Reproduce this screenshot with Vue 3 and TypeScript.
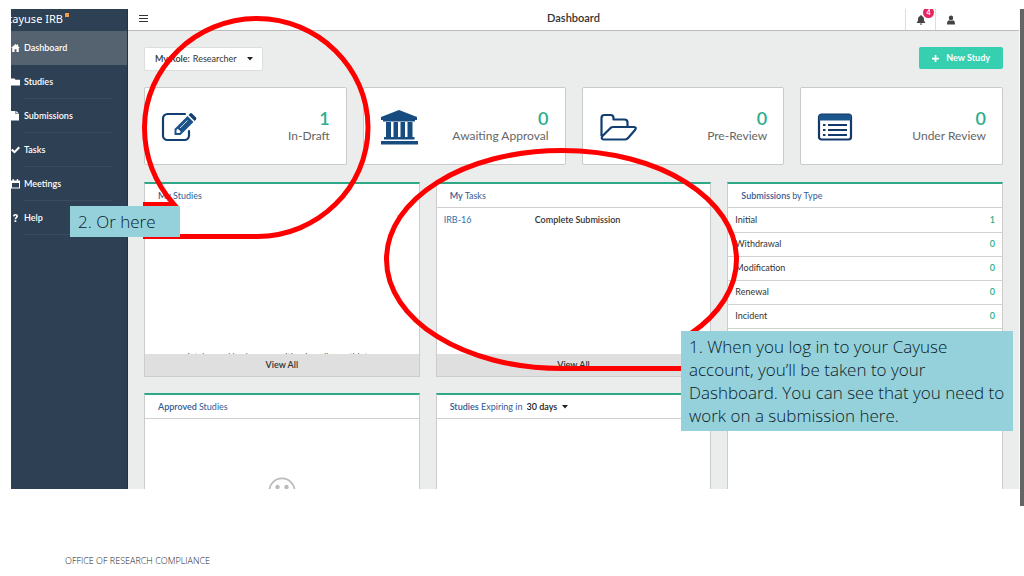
<script setup lang="ts">
import { ref } from 'vue'

interface NavItem { label: string; icon: string; active?: boolean }
interface Stat { label: string; count: number; icon: string }

const navItems: NavItem[] = [
  { label: 'Dashboard', icon: 'M0 5 4.500 1 6 2.300V1.500h1.200v1.900L9 5H7.800v4H5.500V6.200h-2V9H1.200V5z', active: true },
  { label: 'Studies', icon: 'M0 1.500h3.500l1 1.300H9V8.500H0z' },
  { label: 'Submissions', icon: 'M0 0h4.500v3H8v6.500H0zM5.200 0 8 2.400H5.200z' },
  { label: 'Tasks', icon: 'M0 5.200 1.500 3.700 3.500 5.700 7.500 1.500 9 3 3.500 8.500z' },
  { label: 'Meetings', icon: 'M0 1.500h1.500V0h1.300v1.500h3V0h1.300v1.500H9V9.500H0zM1 4v4.500h7V4z' },
  { label: 'Help', icon: 'M2 3.200C2 .2 7 .2 7 3.200 7 4.800 5.200 5 5.200 6.300H3.600C3.600 4.500 5.200 4.400 5.200 3.300 5.200 2.300 3.700 2.300 3.600 3.500zM3.500 7.200h1.800V9H3.500z' },
]

const stats: Stat[] = [
  { label: 'In-Draft', count: 1, icon: 'edit' },
  { label: 'Awaiting Approval', count: 0, icon: 'bank' },
  { label: 'Pre-Review', count: 0, icon: 'folder' },
  { label: 'Under Review', count: 0, icon: 'list' },
]

const submissionTypes = [
  { type: 'Initial', count: 1 },
  { type: 'Withdrawal', count: 0 },
  { type: 'Modification', count: 0 },
  { type: 'Renewal', count: 0 },
  { type: 'Incident', count: 0 },
]

const role = ref('Researcher')
const expiry = ref('30 days')
</script>

<template>
  <div class="slide">
    <div class="capture">
      <div class="app">
        <aside class="sidebar">
          <div class="logo"><span>cayuse IRB</span><i></i></div>
          <nav>
            <a v-for="item in navItems" :key="item.label" href="#" :class="{ active: item.active }">
              <svg viewBox="0 0 9 10" aria-hidden="true"><path :d="item.icon" fill-rule="evenodd" /></svg>
              <span>{{ item.label }}</span>
            </a>
          </nav>
        </aside>

        <div class="content">
          <header class="topbar">
            <button class="menu" aria-label="Menu"><i></i><i></i><i></i></button>
            <h1>Dashboard</h1>
            <div class="tools">
              <button class="bell" aria-label="Notifications">
                <svg viewBox="0 0 10 10"><path d="M5 0C5.600 0 5.700.5 5.700 1 7.500 1.400 8 3 8 4.500 8 6.300 8.800 7.200 9.500 8H.5C1.200 7.200 2 6.300 2 4.500 2 3 2.500 1.400 4.300 1 4.300.5 4.400 0 5 0zM3.800 8.500h2.400C6 10.200 4 10.200 3.800 8.500z" /></svg>
                <span class="badge">4</span>
              </button>
              <button class="user" aria-label="Account">
                <svg viewBox="0 0 10 10"><path d="M5 .5C8 .5 7.800 5.400 5 5.400S2 .5 5 .5zM1 9.500C1 7 1.500 5.500 3 5.200 4.200 6.300 5.800 6.300 7 5.200 8.500 5.500 9 7 9 9.500z" /></svg>
              </button>
            </div>
          </header>

          <main>
            <div class="actions">
              <div class="role">
                <label for="role">My Role:</label>
                <select id="role" v-model="role"><option>Researcher</option></select>
                <svg class="caret" viewBox="0 0 6 4" aria-hidden="true"><path d="M0 0h6L3 3.500z" /></svg>
              </div>
              <button class="new-study">
                <svg viewBox="0 0 8 8" aria-hidden="true"><path d="M3 0h2v3h3v2H5v3H3V5H0V3h3z" /></svg>
                <span>New Study</span>
              </button>
            </div>

            <div class="stats">
              <a v-for="s in stats" :key="s.label" href="#" class="stat">
                <svg v-if="s.icon === 'edit'" viewBox="0 0 38 36" aria-hidden="true">
                  <path d="M24 4H6.500A4.500 4.500 0 0 0 2 8.500v17A4.500 4.500 0 0 0 6.500 30h17a4.500 4.500 0 0 0 4.500-4.500V21" fill="none" stroke="#123f70" stroke-width="2.200" stroke-linecap="round" />
                  <path d="M13.500 19 26.500 6l6 6-13 13h-6z" fill="#1c5489" />
                  <path d="M27.600 4.900l1.400-1.400q1-.8 2 0l4 4q.8 1 0 2l-1.400 1.400z" fill="#123f70" />
                  <path d="M15.500 20v3h3l1.300-1.300-3-3z" fill="#fff" />
                  <path d="M19 18 26.500 10.500" stroke="#fff" stroke-width=".8" />
                </svg>
                <svg v-else-if="s.icon === 'bank'" viewBox="0 0 38 36" aria-hidden="true">
                  <path d="M19 0 37 7v3h-2v1.500H3V10H1V7z" fill="#174c80" />
                  <path d="M6 12h5v15H6zM13.500 12h4.500v15h-4.500zM20.500 12H25v15h-4.500zM27.500 12h5v15h-5zM4 27h30.500v2.500H4zM1 31h37v3.500H1z" fill="#174c80" />
                </svg>
                <svg v-else-if="s.icon === 'folder'" viewBox="0 0 38 36" aria-hidden="true">
                  <path d="M2.500 26V8q0-3 3-3h6q3 0 3 3v1.500h11q3 0 3 3V17M5 29.500h21q2 0 3.500-2l6.500-7.500q2-3-1-3H14q-2 0-3.500 2L3 26.500Q2 29.500 5 29.500z" fill="none" stroke="#123f70" stroke-width="2.200" stroke-linejoin="round" />
                </svg>
                <svg v-else viewBox="0 0 38 36" aria-hidden="true">
                  <rect x="2" y="4.500" width="32" height="25" rx="2.500" fill="#fff" stroke="#12396a" stroke-width="2.200" />
                  <path d="M2 4.500h32v6H2z" fill="#1b568d" />
                  <path d="M6 15h2.500M6 20h2.500M6 25h2.500M11 15h19M11 20h19M11 25h19" stroke="#12396a" stroke-width="2.200" />
                </svg>
                <span class="figures"><strong>{{ s.count }}</strong><span>{{ s.label }}</span></span>
              </a>
            </div>

            <div class="panels">
              <section class="panel plain">
                <h2><b>My</b> Studies</h2>
                <div class="body"><p class="excerpt">intake, and body composition in college athletes</p></div>
                <button class="view-all">View All</button>
              </section>

              <section class="panel">
                <h2><b>My</b> Tasks</h2>
                <div class="body">
                  <table class="tasks"><tbody><tr><td><a href="#">IRB-16</a></td><td><b>Complete Submission</b></td></tr></tbody></table>
                </div>
                <button class="view-all">View All</button>
              </section>

              <section class="panel types">
                <h2><b>Submissions</b> by Type</h2>
                <table><tbody>
                  <tr v-for="t in submissionTypes" :key="t.type"><td>{{ t.type }}</td><td class="count">{{ t.count }}</td></tr>
                </tbody></table>
              </section>

              <section class="panel">
                <h2><b>Approved</b> Studies</h2>
                <div class="body face">
                  <svg viewBox="0 0 28 28" aria-hidden="true"><circle cx="14" cy="14" r="12.700" fill="none" stroke="#bbb" stroke-width="1.800" /><circle cx="9.500" cy="10" r="2.200" /><circle cx="18.500" cy="10" r="2.200" /></svg>
                </div>
              </section>

              <section class="panel">
                <h2>
                  <label for="expiry"><b>Studies</b> Expiring in</label>
                  <select id="expiry" v-model="expiry"><option>30 days</option></select>
                  <svg class="caret" viewBox="0 0 6 4" aria-hidden="true"><path d="M0 0h6L3 3.500z" /></svg>
                </h2>
              </section>
            </div>
          </main>
        </div>
      </div>
      <div class="edge"></div>
    </div>

    <svg class="outlines" viewBox="0 0 1024 576" aria-hidden="true">
      <path d="M143 236.500H257C318 236.500 368 187 368 127.500S318 18.500 257 18.500 144.500 68 144.500 127.500C144.500 158 156 184 174 204.500H143" />
      <path d="M690 368.500H562C464 368.500 386.500 320 386.500 259.500S464 150.500 562 150.500 736.500 199 736.500 259.500C736.500 287 720 314 690 334" />
    </svg>
    <p class="callout second">2. Or here</p>
    <p class="callout first">1. When you log in to your Cayuse account, you’ll be taken to your Dashboard. You can see that you need to work on a submission here.</p>

    <footer>OFFICE OF RESEARCH COMPLIANCE</footer>
  </div>
</template>

<style>
body { margin: 0; background: #fff; }
</style>

<style scoped>
* { box-sizing: border-box; }
.slide { position: relative; min-height: 100vh; overflow: hidden; padding: 9px 0 0 11px; font: 9px/12px Lato, sans-serif; color: #333; background: #fff; }
button, select { font: inherit; color: inherit; border: 0; margin: 0; padding: 0; background: none; }
select { appearance: none; }
a { color: inherit; text-decoration: none; }
h1, h2, p { margin: 0; font-weight: 400; }
b { font-weight: 600; }
.capture { display: flex; }
.app { display: flex; flex: 1; min-width: 0; height: 480px; overflow: hidden; }
.edge { width: 4px; height: 497px; background: #636465; }
.sidebar { width: 117px; flex: none; background: #2e4053; color: #fff; border-right: 1px solid #223247; overflow: hidden; }
.logo { display: flex; height: 22px; margin-left: -4px; font: 11px/20px "Noto Sans", sans-serif; white-space: nowrap; }
.logo i { width: 4px; height: 4px; margin: 4px 0 0 2px; background: #eda04a; }
nav a { display: flex; align-items: center; height: 34px; gap: 4px; font-weight: 600; background: linear-gradient(#3a4c5f, #3a4c5f) 13px 100% / 89px 1px no-repeat; }
nav a.active { background: #55626f; }
nav svg { flex: none; width: 9px; height: 10px; fill: #fff; }
.content { flex: 1; min-width: 0; border-right: 1px solid #f8f8f8; background: #ebecec; }
.topbar { display: grid; grid-template-columns: 1fr auto 1fr; height: 22px; background: #fff; border-bottom: 1px solid #bbb; }
.topbar h1 { font-size: 11px; line-height: 18px; font-weight: 600; }
.menu { width: 9px; height: 18px; margin-left: 11px; display: grid; align-content: center; gap: 2px; }
.menu i { height: 1px; background: #333; }
.tools { display: flex; justify-content: flex-end; }
.bell, .user { position: relative; height: 21px; width: 30px; border-left: 1px solid #ddd; }
.user { width: 84px; text-align: left; padding-left: 10px; }
.bell svg, .user svg { width: 10px; height: 10px; fill: #444; display: block; }
.bell svg { margin-left: 10px; }
.badge { position: absolute; left: 17px; top: -2px; width: 11px; height: 11px; border-radius: 50%; background: #e6265c; color: #fff; font-size: 7px; line-height: 11px; font-weight: 700; text-align: center; }
main { padding: 16px; }
.actions { display: flex; justify-content: space-between; align-items: flex-start; margin-bottom: 16px; }
.role { display: flex; align-items: center; height: 24px; padding: 0 9px 0 10px; background: #fff; border: 1px solid #ddd; border-radius: 2px; }
.role label { font-weight: 600; margin-right: 3px; }
.caret { width: 6px; height: 4px; fill: #222; }
.role .caret { margin-left: 10px; }
.new-study { display: flex; align-items: center; gap: 7px; height: 22px; padding: 0 13px; border-radius: 2px; background: #36d0b0; color: #fff; font-weight: 700; }
.new-study svg { width: 7px; height: 7px; fill: #fff; }
.stats { display: grid; grid-template-columns: repeat(4, 1fr); gap: 16px; margin-bottom: 17px; }
.stat { display: flex; justify-content: space-between; height: 78px; padding: 21px 16px; background: #fff; border: 1px solid #c9caca; border-radius: 2px; }
.stat svg { width: 38px; height: 36px; margin-top: 1px; }
.figures { text-align: right; color: #666; font-size: 12px; line-height: 18px; }
.figures strong { display: block; color: #2aae8a; font-size: 18px; line-height: 18px; font-weight: 600; }
.panels { display: grid; grid-template-columns: repeat(3, 1fr); grid-template-rows: 195px 130px; gap: 16px; }
.panel { display: flex; flex-direction: column; background: #fff; border: 1px solid #ccc; border-top: 2px solid #2fa888; }
.panel h2 { display: flex; flex: none; align-items: center; gap: 2px; height: 24px; padding: 0 13px; font-size: 9px; line-height: 12px; color: #355b96; border-bottom: 1px solid #d0d0d0; }
.plain h2 { border-color: #fff; }
.body { flex: 1; min-height: 0; overflow: hidden; }
.excerpt { margin-top: 143px; text-align: center; color: #555; }
.view-all { height: 22px; font-weight: 600; background: #dfdfdf; }
table { width: 100%; border-collapse: collapse; }
td { height: 24px; padding: 0 7px; }
.types { grid-row: span 2; }
.types td { border-bottom: 1px solid #d2d2d2; }
.types .count { text-align: right; color: #2aae8a; font-weight: 600; }
.tasks td:first-child { width: 91px; color: #2f70ab; }
.face { padding-top: 58px; text-align: center; }
.face svg { width: 28px; height: 28px; fill: #bbb; }
#expiry { color: #222; font-weight: 600; margin: 0 2px; }
.outlines { position: absolute; left: 0; top: 0; width: 1024px; height: 576px; fill: none; stroke: #f00; stroke-width: 5; pointer-events: none; }
.callout { position: absolute; background: #95d1db; color: #0a1a28; font: 300 17px/23px "Open Sans", sans-serif; }
.second { left: 70px; top: 206px; width: 110px; padding: 4px 8px; }
.first { left: 681px; top: 331px; width: 332px; padding: 4px 2px 4px 8px; }
footer { position: absolute; left: 65px; top: 555px; font: 300 9px/12px "Open Sans", sans-serif; color: #222; }
</style>
